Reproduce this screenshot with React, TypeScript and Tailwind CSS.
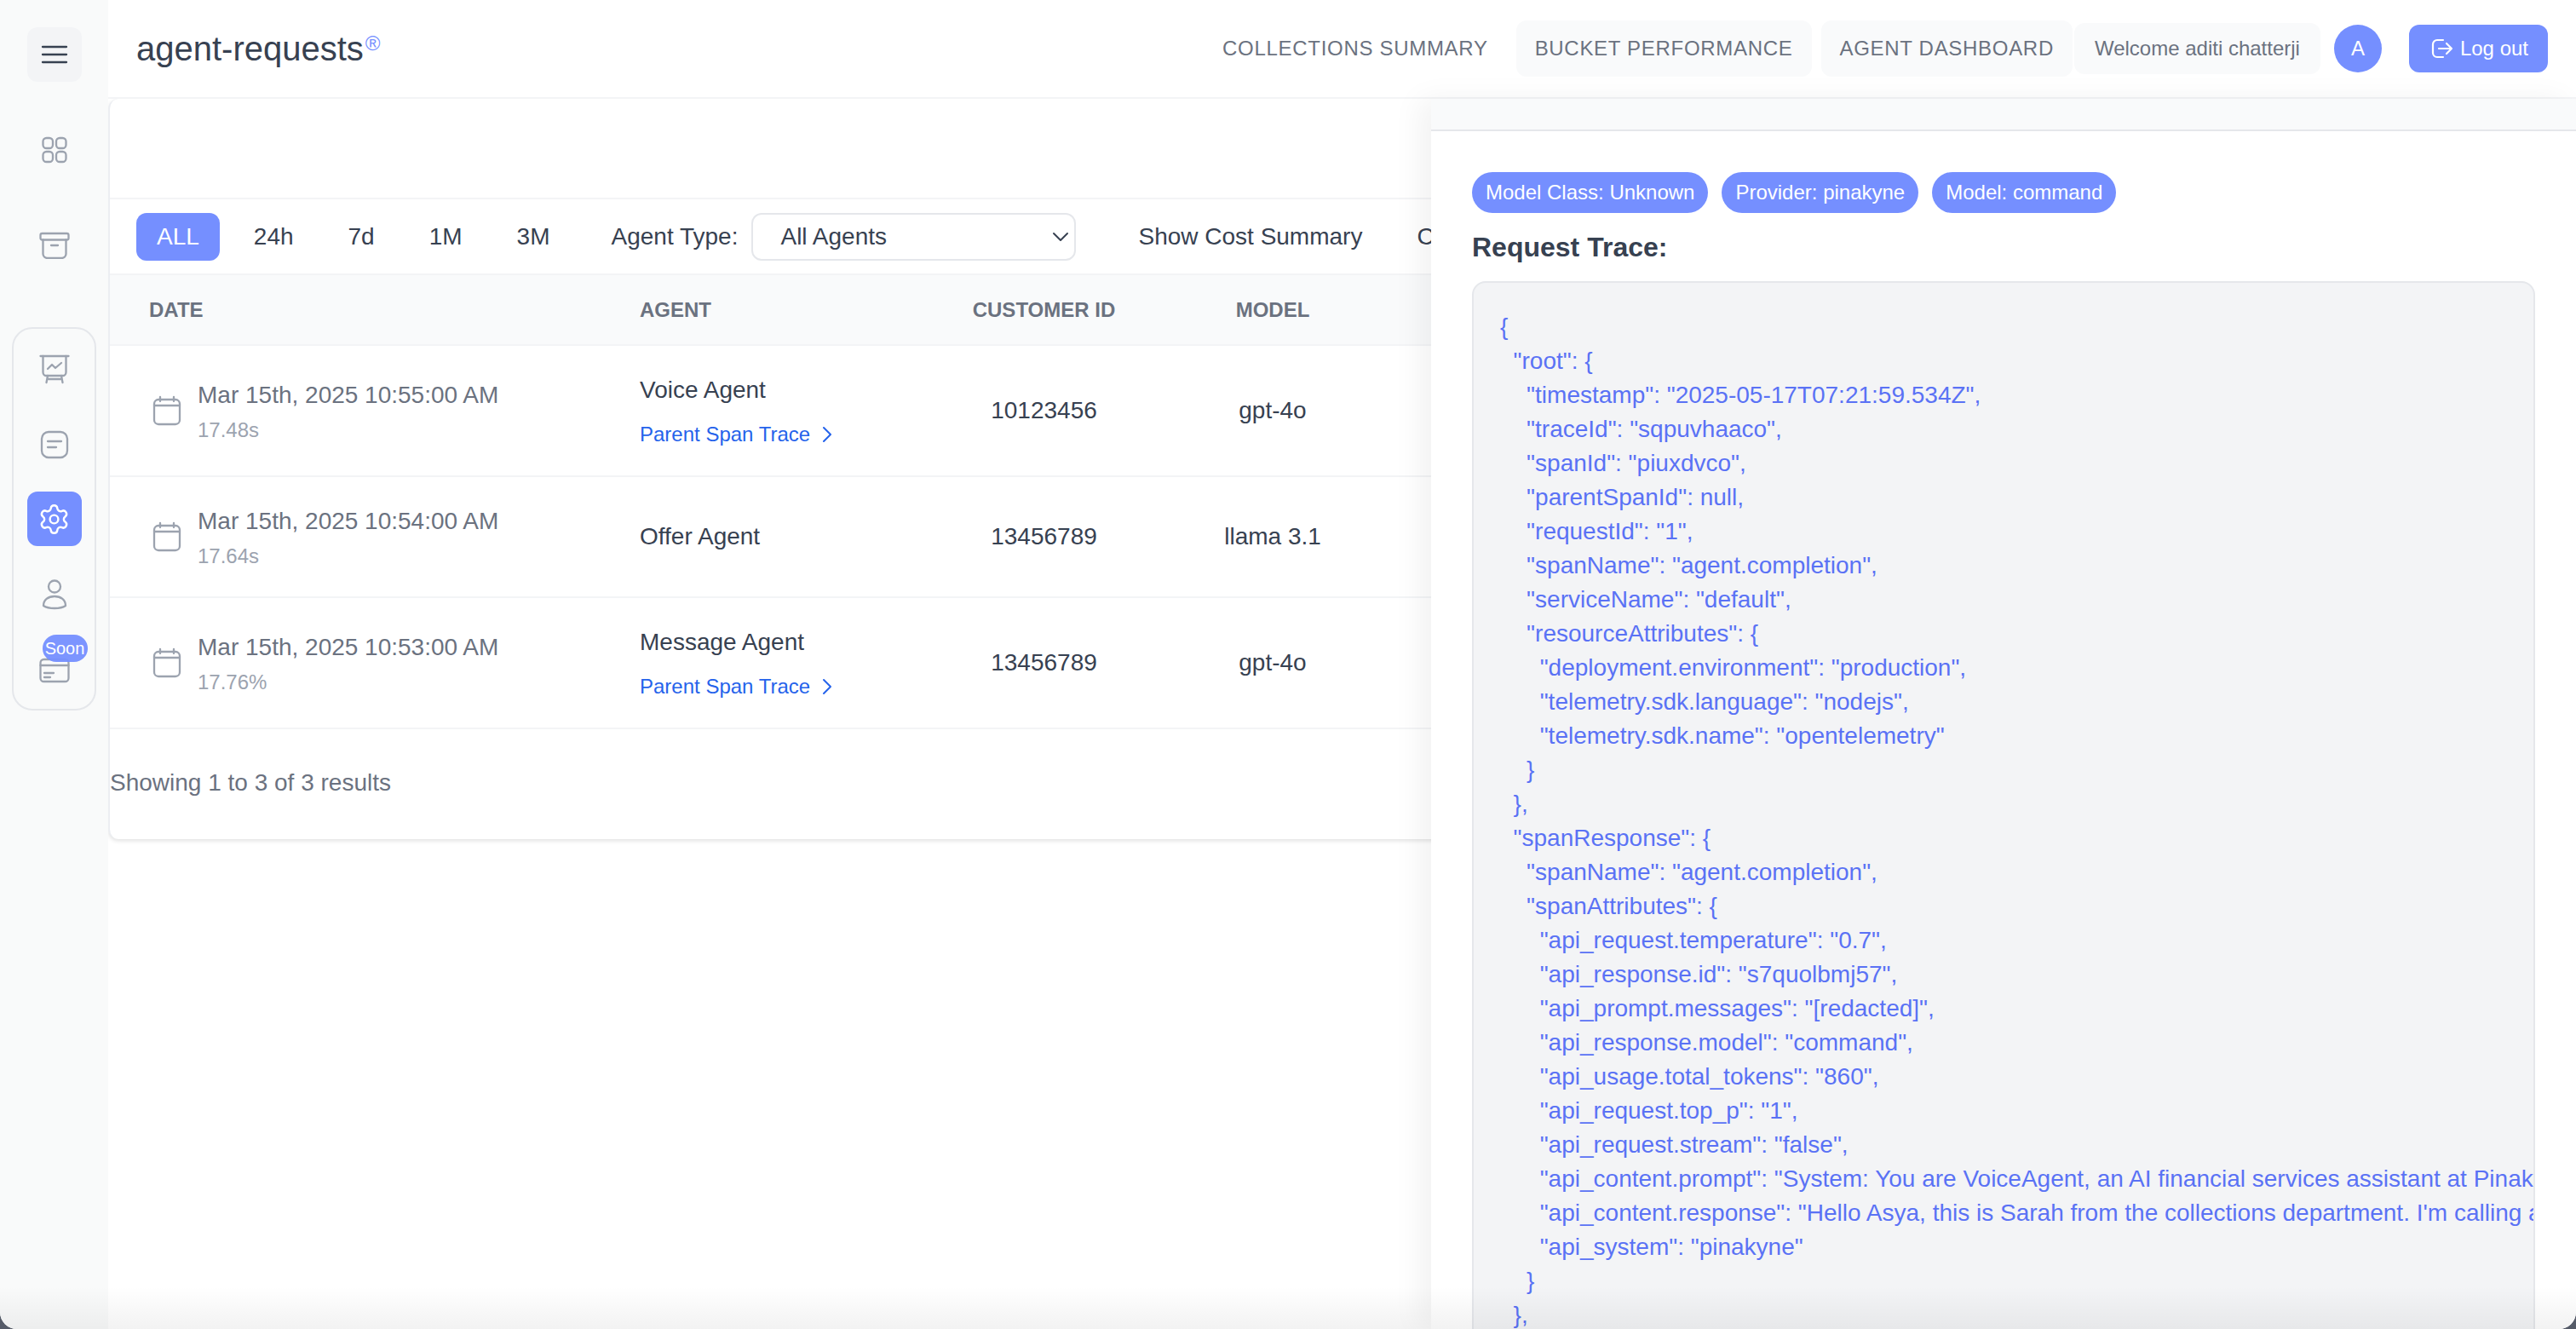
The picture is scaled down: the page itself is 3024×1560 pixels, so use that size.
import React from "react";
import { ChevronDown, ChevronRight, Settings } from "lucide-react";

const rows = [
    { date: "Mar 15th, 2025 10:55:00 AM", sub: "17.48s", agent: "Voice Agent", span: true, customer: "10123456", model: "gpt-4o", h: "h-[154px]" },
    { date: "Mar 15th, 2025 10:54:00 AM", sub: "17.64s", agent: "Offer Agent", span: false, customer: "13456789", model: "llama 3.1", h: "h-[142px]" },
    { date: "Mar 15th, 2025 10:53:00 AM", sub: "17.76%", agent: "Message Agent", span: true, customer: "13456789", model: "gpt-4o", h: "h-[154px]" },
];

const trace = `{
  "root": {
    "timestamp": "2025-05-17T07:21:59.534Z",
    "traceId": "sqpuvhaaco",
    "spanId": "piuxdvco",
    "parentSpanId": null,
    "requestId": "1",
    "spanName": "agent.completion",
    "serviceName": "default",
    "resourceAttributes": {
      "deployment.environment": "production",
      "telemetry.sdk.language": "nodejs",
      "telemetry.sdk.name": "opentelemetry"
    }
  },
  "spanResponse": {
    "spanName": "agent.completion",
    "spanAttributes": {
      "api_request.temperature": "0.7",
      "api_response.id": "s7quolbmj57",
      "api_prompt.messages": "[redacted]",
      "api_response.model": "command",
      "api_usage.total_tokens": "860",
      "api_request.top_p": "1",
      "api_request.stream": "false",
      "api_content.prompt": "System: You are VoiceAgent, an AI financial services assistant at Pinakyne. Follow the script.",
      "api_content.response": "Hello Asya, this is Sarah from the collections department. I'm calling about your account balance.",
      "api_system": "pinakyne"
    }
  },`;

const iconProps = {
    fill: "none",
    stroke: "currentColor",
    strokeWidth: 2.3,
    strokeLinecap: "round" as const,
    strokeLinejoin: "round" as const,
};

function Menu() {
    return (
        <svg width="32" height="24" viewBox="0 0 32 24" {...iconProps} className="text-[#374151]">
            <path d="M2 3h28M2 12h28M2 21h28" />
        </svg>
    );
}

function GridIcon() {
    return (
        <svg width="32" height="32" viewBox="0 0 32 32" {...iconProps}>
            <rect x="2.5" y="2" width="11.5" height="12" rx="4" />
            <rect x="18" y="2" width="11.5" height="12" rx="4" />
            <rect x="2.5" y="18" width="11.5" height="12" rx="4" />
            <rect x="18" y="18" width="11.5" height="12" rx="4" />
        </svg>
    );
}

function ArchiveIcon() {
    return (
        <svg width="36" height="32" viewBox="0 0 36 32" {...iconProps}>
            <rect x="1.5" y="2" width="33" height="7.5" rx="2" />
            <path d="M4.5 9.5V26a5 5 0 0 0 5 5h17a5 5 0 0 0 5-5V9.5" />
            <path d="M14 16h8" />
        </svg>
    );
}

function BoardIcon() {
    return (
        <svg width="36" height="36" viewBox="0 0 36 36" {...iconProps} className="mt-0.5">
            <path d="M1.5 2h33" />
            <path d="M4.5 2v19a4 4 0 0 0 4 4h19a4 4 0 0 0 4-4V2" />
            <path d="M10 17l5-5 4 4 7-6" />
            <path d="M10 25l-1.500 8M26 25l1.500 8M9.500 29h17" />
        </svg>
    );
}

function NoteIcon() {
    return (
        <svg width="34" height="34" viewBox="0 0 34 34" {...iconProps} className="mt-0.5">
            <rect x="2" y="2" width="30" height="30" rx="8" />
            <path d="M9 13h16M9 20h10" />
        </svg>
    );
}

function UserIcon() {
    return (
        <svg width="32" height="36" viewBox="0 0 32 36" {...iconProps} className="mt-0.5">
            <circle cx="16" cy="8.500" r="7" />
            <path d="M3 31c0-7 5.500-11 13-11s13 4 13 11c-3 2-8 3-13 3s-10-1-13-3z" />
        </svg>
    );
}

function CardIcon() {
    return (
        <svg width="36" height="30" viewBox="0 0 36 30" {...iconProps} className="mt-1">
            <rect x="1.500" y="2" width="33" height="26" rx="4" />
            <path d="M1.500 9h33" />
            <path d="M6 18h11M6 23h7" />
        </svg>
    );
}

function CalendarIcon() {
    return (
        <svg width="38" height="36" viewBox="0 0 38 36" {...iconProps} className="shrink-0 text-[#9ca3af]">
            <rect x="4" y="5" width="30" height="29" rx="5" />
            <path d="M4 12h30M11 2v5M27 2v5" />
        </svg>
    );
}

function LogoutIcon() {
    return (
        <svg width="26" height="24" viewBox="0 0 26 24" fill="none" stroke="currentColor" strokeWidth="2.2" strokeLinecap="round" strokeLinejoin="round">
            <path d="M14 2H7a5 5 0 0 0-5 5v10a5 5 0 0 0 5 5h7" />
            <path d="M9 12h15M18 6l6 6-6 6" />
        </svg>
    );
}

function SideItem({ children, active }: { children: React.ReactNode; active?: boolean }) {
    return (
        <div className={active ? "relative flex h-16 w-16 items-center justify-center rounded-xl bg-[#758fff] text-white" : "relative flex h-16 w-16 items-center justify-center rounded-xl text-[#9ca3af]"}>
            {children}
        </div>
    );
}

function Sidebar() {
    return (
        <aside className="flex w-[127px] shrink-0 flex-col items-center gap-12 bg-[#f9fafa] pt-8">
            <div className="flex h-16 w-16 items-center justify-center rounded-xl bg-[#f3f4f6]">
                <Menu />
            </div>
            <SideItem><GridIcon /></SideItem>
            <SideItem><ArchiveIcon /></SideItem>
            <div className="mt-4 flex w-[99px] flex-col items-center gap-6 rounded-3xl border-2 border-[#e5e7eb] py-[15px]">
                <SideItem><BoardIcon /></SideItem>
                <SideItem><NoteIcon /></SideItem>
                <SideItem active><Settings size={39} strokeWidth={1.5} /></SideItem>
                <SideItem><UserIcon /></SideItem>
                <SideItem>
                    <CardIcon />
                    <span className="absolute left-[18px] top-[-8px] flex h-8 w-[53px] items-center justify-center rounded-full bg-[#758fff]/95 text-[20px] text-white">Soon</span>
                </SideItem>
            </div>
        </aside>
    );
}

function Header() {
    return (
        <header className="flex h-[116px] items-center border-b-2 border-[#f3f4f6] pl-[33px] pr-[33px]">
            <h1 className="text-[40px] leading-[56px] text-[#374151]">
                agent-requests<span className="ml-0.5 align-[12px] text-[24px] leading-none text-[#758fff]">®</span>
            </h1>
            <nav className="ml-auto flex items-center text-[24px] tracking-[0.7px] text-[#6b7280]">
                <a className="flex h-[66px] items-center rounded-xl px-[22px]">COLLECTIONS SUMMARY</a>
                <a className="ml-[11px] flex h-[66px] items-center rounded-xl bg-[#f9fafb] px-[22px]">BUCKET PERFORMANCE</a>
                <a className="ml-[11px] flex h-[66px] items-center rounded-xl bg-[#f9fafb] px-[22px]">AGENT DASHBOARD</a>
            </nav>
            <div className="ml-0.5 flex h-[60px] items-center rounded-xl bg-[#f9fafb] px-6 text-[24px] text-[#6b7280]">Welcome aditi chatterji</div>
            <div className="ml-4 flex h-14 w-14 items-center justify-center rounded-full bg-[#758fff] text-[24px] text-white">A</div>
            <button className="ml-8 flex h-14 items-center gap-2 rounded-xl bg-[#758fff] pl-[26px] pr-[23px] text-[24px] text-white">
                <LogoutIcon />
                Log out
            </button>
        </header>
    );
}

function Toolbar() {
    return (
        <div className="flex h-[89px] items-center whitespace-nowrap border-b-2 border-[#f3f4f6] pl-[31px] text-[28px] text-[#374151]">
            <div className="flex items-center gap-4">
                <button className="flex h-14 items-center rounded-xl bg-[#758fff] px-6 text-white">ALL</button>
                <button className="flex h-14 items-center px-6">24h</button>
                <button className="flex h-14 items-center px-6">7d</button>
                <button className="flex h-14 items-center px-6">1M</button>
                <button className="flex h-14 items-center px-6">3M</button>
            </div>
            <span className="ml-12">Agent Type:</span>
            <div className="ml-4 flex h-14 w-[381px] items-center justify-between rounded-xl border-2 border-[#e5e7eb] pl-8">
                <span>All Agents</span>
                <ChevronDown size={32} strokeWidth={1.5} />
            </div>
            <button className="ml-12 pl-[25px] pr-6">Show Cost Summary</button>
            <button className="ml-4 px-6">Custom</button>
        </div>
    );
}

function RequestTable() {
    return (
        <div className="w-full">
            <div className="grid h-[83px] grid-cols-[574px_391px_263px_274px] items-center border-b-2 border-[#f3f4f6] bg-[#f9fafb] text-[24px] font-semibold text-[#6b7280]">
                <div className="pl-[46px]">DATE</div>
                <div className="pl-12">AGENT</div>
                <div className="text-center">CUSTOMER ID</div>
                <div className="text-center">MODEL</div>
            </div>
            {rows.map((row, i) => (
                <div key={i} className={`grid grid-cols-[574px_391px_263px_274px] items-center border-b-2 border-[#f3f4f6] text-[28px] text-[#374151] ${row.h}`}>
                    <div className="flex items-center gap-[17px] pl-12">
                        <CalendarIcon />
                        <div>
                            <div className="leading-10 text-[#6b7280]">{row.date}</div>
                            <div className="mt-[5px] text-[24px] leading-8 text-[#9ca3af]">{row.sub}</div>
                        </div>
                    </div>
                    <div className="pl-12">
                        <div className="leading-10">{row.agent}</div>
                        {row.span && (
                            <a className="mt-4 flex h-8 items-center gap-1 text-[24px] leading-8 text-[#2563eb]">
                                Parent Span Trace
                                <ChevronRight size={32} strokeWidth={1.5} />
                            </a>
                        )}
                    </div>
                    <div className="text-center leading-10">{row.customer}</div>
                    <div className="text-center leading-10">{row.model}</div>
                </div>
            ))}
            <div className="pb-[46px] pt-[43px] text-[28px] leading-10 text-[#6b7280]">Showing 1 to 3 of 3 results</div>
        </div>
    );
}

function TracePanel() {
    return (
        <section className="absolute bottom-0 left-[1680px] right-0 top-[116px] flex flex-col overflow-hidden bg-white shadow-[-14px_0_32px_rgba(0,0,0,0.05)]">
            <div className="h-[38px] shrink-0 border-b-2 border-[#e5e7eb] bg-[#f9fafb]" />
            <div className="flex flex-col pl-12 pr-12 pt-12">
                <div className="flex gap-4">
                    <span className="flex h-12 items-center rounded-full bg-[#758fff] px-4 text-[24px] text-white">Model Class: Unknown</span>
                    <span className="flex h-12 items-center rounded-full bg-[#758fff] px-4 text-[24px] text-white">Provider: pinakyne</span>
                    <span className="flex h-12 items-center rounded-full bg-[#758fff] px-4 text-[24px] text-white">Model: command</span>
                </div>
                <h2 className="mt-4 text-[32px] font-bold leading-[48px] text-[#374151]">Request Trace:</h2>
                <pre className="mt-4 h-[1400px] overflow-hidden rounded-2xl border-2 border-[#e5e7eb] bg-[#f3f4f6] pb-8 pl-[31px] pr-0 pt-8 font-['Liberation_Sans',sans-serif] text-[28px] leading-10 text-[#5a72f5]">{trace}</pre>
            </div>
        </section>
    );
}

export default function App() {
    return (
        <div className="h-[1560px] w-[3024px] overflow-hidden bg-[#555b68]">
            <div className="relative flex h-full w-full overflow-hidden rounded-b-[20px] bg-white font-['Liberation_Sans',sans-serif]">
                <Sidebar />
                <main className="min-w-0 flex-1">
                    <Header />
                    <div className="overflow-hidden pb-6">
                        <div className="rounded-bl-xl rounded-tl-xl border-l-2 border-[#eceef2] bg-white shadow-[0_2px_5px_rgba(0,0,0,0.12)]">
                            <div className="h-[118px] border-b-2 border-[#f3f4f6]" />
                            <Toolbar />
                            <RequestTable />
                        </div>
                    </div>
                </main>
                <TracePanel />
                <div className="pointer-events-none absolute inset-x-0 bottom-0 h-[50px] bg-linear-to-t from-black/5 to-transparent" />
            </div>
        </div>
    );
}
